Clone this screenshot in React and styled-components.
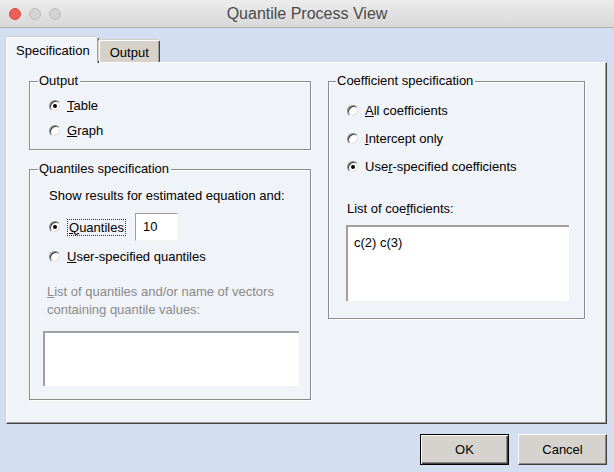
import React from "react";
import styled, { createGlobalStyle } from "styled-components";

const GlobalStyle = createGlobalStyle`
  html, body {
    margin: 0;
    padding: 0;
    background: #d3dff0;
  }
  body {
    font-family: "Liberation Sans", Arial, sans-serif;
  }
`;

function App() {
  return (
    <Window>
      <GlobalStyle />
      <TitleBar>
        <Lights>
          <Light $color="#ee5f58" $edge="#d54a42" />
          <Light $color="#d3d3d3" $edge="#bdbdbd" />
          <Light $color="#d3d3d3" $edge="#bdbdbd" />
        </Lights>
        <Title>Quantile Process View</Title>
        <span />
      </TitleBar>

      <Content>
        <TabRow>
          <Tab $active>Specification</Tab>
          <Tab>Output</Tab>
        </TabRow>

        <Panel>
          <Column>
            <Group $height={77}>
              <Caption>Output</Caption>
              <RadioList $top={4}>
                <RadioRow $h={25}>
                  <Radio $checked />
                  <span><Key>T</Key>able</span>
                </RadioRow>
                <RadioRow $h={25}>
                  <Radio />
                  <span><Key>G</Key>raph</span>
                </RadioRow>
              </RadioList>
            </Group>

            <Group $height={239}>
              <Caption>Quantiles specification</Caption>
              <Text $top={11}>Show results for estimated equation and:</Text>
              <RadioRow $h={28} $top={9}>
                <Radio $checked />
                <Focus><Key>Q</Key>uantiles</Focus>
                <Field>10</Field>
              </RadioRow>
              <RadioRow $h={25} $top={3}>
                <Radio />
                <span><Key>U</Key>ser-specified quantiles</span>
              </RadioRow>
              <Note>
                <Key>L</Key>ist of quantiles and/or name of vectors
                <br />
                containing quantile values:
              </Note>
              <Box $w={256} $h={55} $left={-6} $top={12} />
            </Group>
          </Column>

          <Column>
            <Group $height={246} $pad={18}>
              <Caption>Coefficient specification</Caption>
              <RadioList $top={8}>
                <RadioRow $h={28}>
                  <Radio />
                  <span><Key>A</Key>ll coefficients</span>
                </RadioRow>
                <RadioRow $h={28}>
                  <Radio />
                  <span><Key>I</Key>ntercept only</span>
                </RadioRow>
                <RadioRow $h={28}>
                  <Radio $checked />
                  <span>Use<Key>r</Key>-specified coefficients</span>
                </RadioRow>
              </RadioList>
              <Text $top={20}>List of coe<Key>f</Key>ficients:</Text>
              <Box $w={223} $h={76} $left={-1} $top={8}>c(2) c(3)</Box>
            </Group>
          </Column>
        </Panel>

        <ButtonRow>
          <Button $default>OK</Button>
          <Button>Cancel</Button>
        </ButtonRow>
      </Content>
    </Window>
  );
}

const Window = styled.div`
  width: 614px;
  height: 472px;
  display: flex;
  flex-direction: column;
  background: #d3dff0;
  overflow: hidden;
`;

const TitleBar = styled.div`
  height: 27px;
  display: grid;
  grid-template-columns: 1fr auto 1fr;
  align-items: center;
  background: linear-gradient(#ececec, #d8d8d8);
  border-bottom: 1px solid #b1b1b1;
`;

const Lights = styled.div`
  display: flex;
  gap: 8px;
  padding-left: 9px;
`;

const Light = styled.span`
  width: 12px;
  height: 12px;
  border-radius: 50%;
  box-sizing: border-box;
  background: ${(p) => p.$color};
  border: 1px solid ${(p) => p.$edge};
`;

const Title = styled.div`
  font-size: 16px;
  color: #4a4a4a;
  padding-top: 1px;
`;

const Content = styled.div`
  padding: 9px 7px 0 6px;
  display: flex;
  flex-direction: column;
`;

const TabRow = styled.div`
  display: flex;
  align-items: flex-end;
  height: 25px;
  position: relative;
  z-index: 1;
`;

const Tab = styled.div`
  box-sizing: border-box;
  height: ${(p) => (p.$active ? "26px" : "22px")};
  margin-bottom: ${(p) => (p.$active ? "-1px" : "0")};
  padding: ${(p) => (p.$active ? "5px 8px 0 9px" : "4px 10px 0 10px")};
  font-size: 13px;
  color: #000;
  background: ${(p) => (p.$active ? "#f0f3f8" : "#d6d2ca")};
  border-top: 1px solid #fff;
  border-left: 1px solid #fff;
  border-right: 1px solid #404040;
  border-radius: 2px 2px 0 0;
  box-shadow: -1px -1px 0 #d4d0c8, inset -1px 0 0 #a0a0a0;
`;

const Panel = styled.div`
  box-sizing: border-box;
  width: 601px;
  height: 362px;
  display: grid;
  grid-template-columns: 282px 257px;
  column-gap: 17px;
  align-items: start;
  padding: 10px 0 0 22px;
  background: #f0f3f8;
  border: 1px solid;
  border-color: #fff #404040 #404040 #fff;
  box-shadow: inset -1px -1px 0 #a0a0a0, -1px 0 0 #d4d0c8;
`;

const Column = styled.div`
  display: flex;
  flex-direction: column;
  gap: 11px;
`;

const Group = styled.fieldset`
  box-sizing: border-box;
  height: ${(p) => p.$height}px;
  margin: 0;
  min-width: 0;
  padding: 0 0 0 ${(p) => p.$pad || 19}px;
  border: 1px solid #8c8c8c;
  box-shadow: inset 1px 1px 0 #fff, 1px 1px 0 #fff;
  font-size: 13px;
  color: #000;
`;

const Caption = styled.legend`
  padding: 0 2px 0 1px;
  margin-left: -11px;
  line-height: 16px;
  font-size: 13px;
`;

const RadioList = styled.div`
  padding-top: ${(p) => p.$top || 0}px;
  display: flex;
  flex-direction: column;
`;

const RadioRow = styled.label`
  display: flex;
  align-items: center;
  gap: 6px;
  height: ${(p) => p.$h}px;
  margin-top: ${(p) => p.$top || 0}px;
  line-height: 16px;
`;

const Radio = styled.span`
  position: relative;
  flex: none;
  box-sizing: border-box;
  width: 12px;
  height: 12px;
  border-radius: 50%;
  background: #fff;
  border: 1px solid;
  border-color: #8a8a8a #f4f4f4 #f4f4f4 #8a8a8a;
  box-shadow: inset 1px 1px 0 #3c3c3c, inset -1px -1px 0 #dcdcdc;
  &::after {
    content: "";
    display: ${(p) => (p.$checked ? "block" : "none")};
    position: absolute;
    left: 3px;
    top: 3px;
    width: 4px;
    height: 4px;
    border-radius: 50%;
    background: #000;
  }
`;

const Key = styled.span`
  text-decoration: underline;
`;

const Focus = styled.span`
  border: 1px dotted #333;
  padding: 0 1px;
  line-height: 15px;
`;

const Field = styled.div`
  box-sizing: border-box;
  width: 43px;
  height: 28px;
  margin-left: 3px;
  padding: 5px 0 0 7px;
  background: #fff;
  border: 1px solid;
  border-color: #9c9c9c #f4f4f4 #f4f4f4 #9c9c9c;
  font-size: 13px;
`;

const Text = styled.div`
  margin-top: ${(p) => p.$top || 0}px;
  line-height: 16px;
`;

const Note = styled.div`
  margin-top: 14px;
  margin-left: -2px;
  line-height: 18px;
  color: #8a8a8a;
`;

const Box = styled.div`
  box-sizing: border-box;
  width: ${(p) => p.$w}px;
  height: ${(p) => p.$h}px;
  margin-top: ${(p) => p.$top}px;
  margin-left: ${(p) => p.$left}px;
  padding: 8px 0 0 6px;
  background: #fff;
  border-top: 2px solid #a0a0a0;
  border-left: 2px solid #a0a0a0;
  font-size: 13px;
  line-height: 16px;
`;

const ButtonRow = styled.div`
  display: flex;
  justify-content: flex-end;
  gap: 9px;
  padding-top: 10px;
`;

const Button = styled.button`
  box-sizing: border-box;
  width: 89px;
  height: 31px;
  padding: 0;
  font-family: "Liberation Sans", Arial, sans-serif;
  font-size: 13px;
  color: #000;
  background: #d6d3ce;
  border: 1px solid;
  border-color: ${(p) => (p.$default ? "#000" : "#fff #404040 #404040 #fff")};
  box-shadow: ${(p) =>
    p.$default
      ? "inset 1px 1px 0 #fff, inset -1px -1px 0 #404040, inset -2px -2px 0 #8a8a8a"
      : "inset -1px -1px 0 #8a8a8a"};
`;

export default App;
